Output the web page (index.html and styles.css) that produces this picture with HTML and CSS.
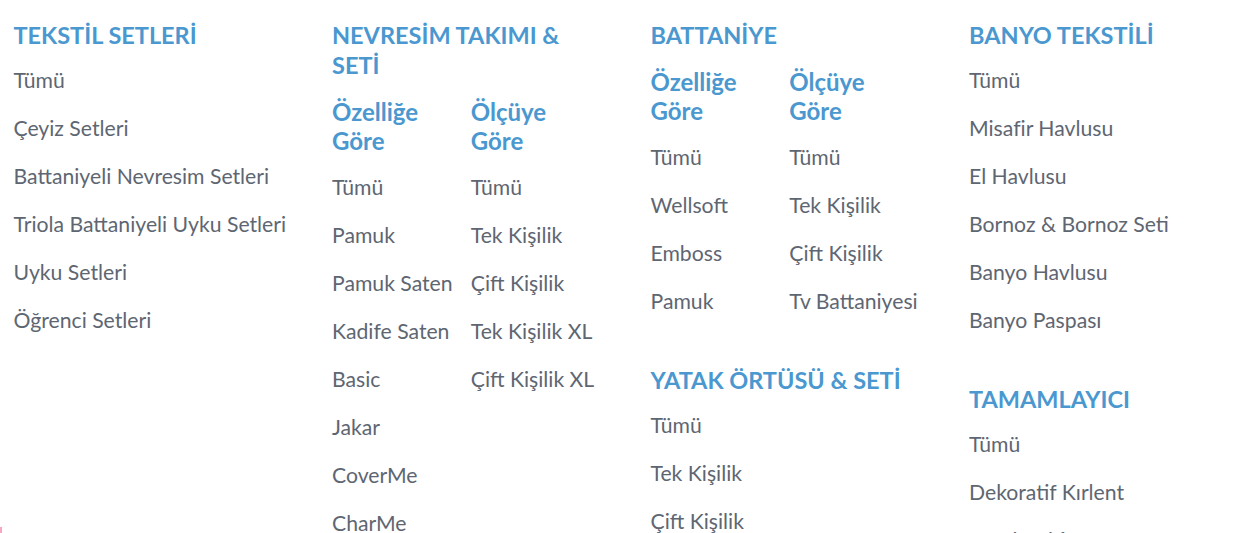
FILE: index.html
```html
<!DOCTYPE html>
<html lang="tr">

<head>
    <meta charset="UTF-8">
    <meta name="viewport" content="width=device-width, initial-scale=1.0">
    <title>Kategoriler</title>
    <link rel="stylesheet" href="styles.css">
</head>

<body>
    <!-- Menü kolonları -->
    <div class="mega-menu">
        <div class="menu-col">
            <div class="menu-group">
                <h3 class="menu-title">TEKSTİL SETLERİ</h3>
                <a href="#">Tümü</a>
                <a href="#">Çeyiz Setleri</a>
                <a href="#">Battaniyeli Nevresim Setleri</a>
                <a href="#">Triola Battaniyeli Uyku Setleri</a>
                <a href="#">Uyku Setleri</a>
                <a href="#">Öğrenci Setleri</a>
            </div>
        </div>

        <div class="menu-col">
            <div class="menu-group">
                <h3 class="menu-title">NEVRESİM TAKIMI &amp; SETİ</h3>
                <div class="sub-groups">
                    <div class="sub-group">
                        <h4 class="sub-title">Özelliğe Göre</h4>
                        <a href="#">Tümü</a>
                        <a href="#">Pamuk</a>
                        <a href="#">Pamuk Saten</a>
                        <a href="#">Kadife Saten</a>
                        <a href="#">Basic</a>
                        <a href="#">Jakar</a>
                        <a href="#">CoverMe</a>
                        <a href="#">CharMe</a>
                    </div>
                    <div class="sub-group">
                        <h4 class="sub-title">Ölçüye Göre</h4>
                        <a href="#">Tümü</a>
                        <a href="#">Tek Kişilik</a>
                        <a href="#">Çift Kişilik</a>
                        <a href="#">Tek Kişilik XL</a>
                        <a href="#">Çift Kişilik XL</a>
                    </div>
                </div>
            </div>
        </div>

        <div class="menu-col">
            <div class="menu-group">
                <h3 class="menu-title">BATTANİYE</h3>
                <div class="sub-groups">
                    <div class="sub-group">
                        <h4 class="sub-title">Özelliğe Göre</h4>
                        <a href="#">Tümü</a>
                        <a href="#">Wellsoft</a>
                        <a href="#">Emboss</a>
                        <a href="#">Pamuk</a>
                    </div>
                    <div class="sub-group">
                        <h4 class="sub-title">Ölçüye Göre</h4>
                        <a href="#">Tümü</a>
                        <a href="#">Tek Kişilik</a>
                        <a href="#">Çift Kişilik</a>
                        <a href="#">Tv Battaniyesi</a>
                    </div>
                </div>
            </div>
            <div class="menu-group">
                <h3 class="menu-title">YATAK ÖRTÜSÜ &amp; SETİ</h3>
                <a href="#">Tümü</a>
                <a href="#">Tek Kişilik</a>
                <a href="#">Çift Kişilik</a>
            </div>
        </div>

        <div class="menu-col">
            <div class="menu-group">
                <h3 class="menu-title">BANYO TEKSTİLİ</h3>
                <a href="#">Tümü</a>
                <a href="#">Misafir Havlusu</a>
                <a href="#">El Havlusu</a>
                <a href="#">Bornoz &amp; Bornoz Seti</a>
                <a href="#">Banyo Havlusu</a>
                <a href="#">Banyo Paspası</a>
            </div>
            <div class="menu-group">
                <h3 class="menu-title">TAMAMLAYICI</h3>
                <a href="#">Tümü</a>
                <a href="#">Dekoratif Kırlent</a>
                <a href="#">Yastık Kılıfı</a>
            </div>
        </div>
    </div>

    <!-- Köşedeki küçük işaret -->
    <span class="corner-mark"></span>
</body>

</html>
```

FILE: styles.css
```css
body {
    margin: 0;
    font-family: Lato, 'Open Sans', sans-serif;
    background-color: #fff;
    color: #5b6470;
    overflow: hidden;
    height: 533px;
    position: relative;
}

/* Kolonlar */
.mega-menu {
    display: grid;
    grid-template-columns: repeat(4, 318.5px);
    padding: 20px 0 0 13.5px;
}

.menu-col {
    padding-right: 41px;
}

.menu-group + .menu-group {
    margin-top: 40px;
}

/* Başlıklar */
.menu-title {
    margin: 0 0 6px;
    font-size: 23.5px;
    line-height: 30px;
    font-weight: bold;
    color: #4a98cf;
}

.sub-groups {
    display: grid;
    grid-template-columns: 1fr 1fr;
    margin-top: 17px;
}

.sub-title {
    margin: 0 0 8px;
    font-size: 24px;
    line-height: 29px;
    font-weight: bold;
    color: #4a98cf;
    padding-right: 20px;
}

/* Linkler */
.menu-group a {
    display: block;
    color: #5e6672;
    text-decoration: none;
    font-size: 21.2px;
    line-height: 24px;
    padding: 12px 0;
    white-space: nowrap;
}

.corner-mark {
    position: absolute;
    left: 0;
    bottom: 0;
    width: 2px;
    height: 6px;
    background-color: #f7a8c0;
}
```
